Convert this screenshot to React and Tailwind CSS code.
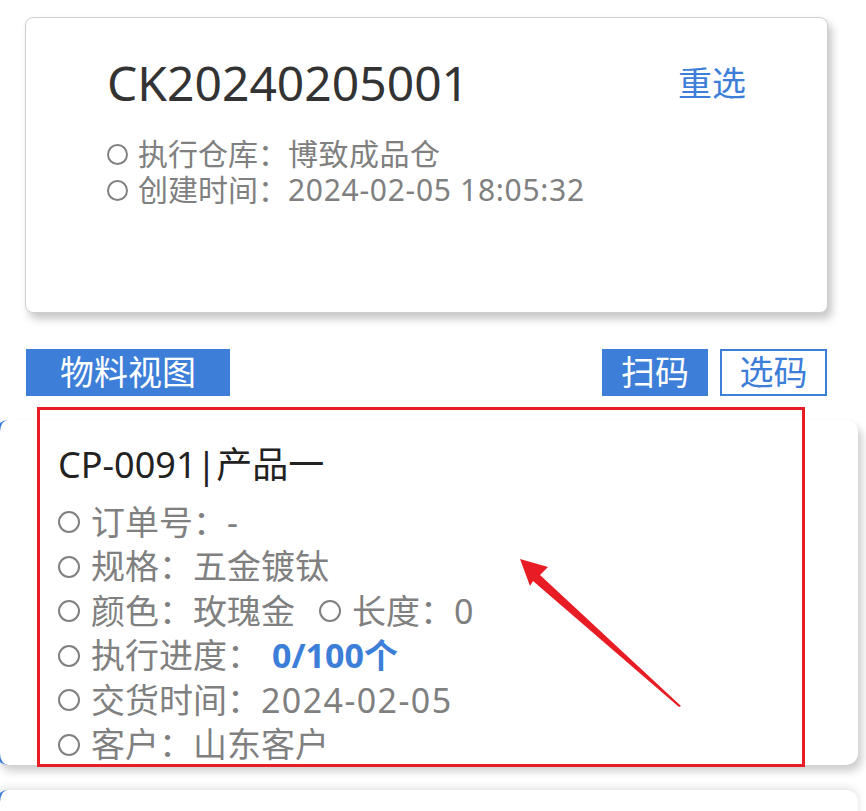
import React from "react";

const FONT = { fontFamily: '"Noto Sans", "Noto Sans CJK SC", sans-serif' };

const orderInfo = {
  code: "CK20240205001",
  warehouse: "博致成品仓",
  createdAt: "2024-02-05 18:05:32",
};

const material = {
  code: "CP-0091",
  name: "产品一",
  orderNo: "-",
  spec: "五金镀钛",
  color: "玫瑰金",
  length: 0,
  done: 0,
  total: 100,
  deliveryDate: "2024-02-05",
  customer: "山东客户",
};

function Dot({ size = "w-[22px] h-[22px]" }) {
  return <span className={`inline-block ${size} rounded-full border-2 border-[#808080] shrink-0`} />;
}

function InfoLine({ children }) {
  return (
    <div className="flex items-center gap-[11px] h-[44.5px]">
      <Dot />
      <div className="flex items-center">{children}</div>
    </div>
  );
}

export default function App() {
  return (
    <div className="relative w-[866px] h-[811px] overflow-hidden bg-white" style={FONT}>
      {/* order header card */}
      <div className="pt-[17px] pl-[25px] pr-[38px]">
        <div className="h-[296px] rounded-[8px] border border-[#cfcfcf] bg-white shadow-[4px_6px_8px_rgba(0,0,0,0.22)] pl-[81px] pr-[81px] pt-[33px]">
          <div className="flex items-center justify-between">
            <h1 className="text-[48px] leading-[64px] text-[#333]">{orderInfo.code}</h1>
            <button className="text-[34px] leading-[64px] text-[#3d7ed8]">重选</button>
          </div>
          <div className="mt-[21px] text-[30px] leading-[36px] text-[#808080]">
            <div className="flex items-center gap-[10px] h-[36px]">
              <Dot size="w-[21px] h-[21px]" />
              <span className="flex">
                <span>执行仓库：</span>
                <span className="tracking-[0.5px]">{orderInfo.warehouse}</span>
              </span>
            </div>
            <div className="flex items-center gap-[10px] h-[36px]">
              <Dot size="w-[21px] h-[21px]" />
              <span className="flex">
                <span>创建时间：</span>
                <span className="tracking-[0.7px]">{orderInfo.createdAt}</span>
              </span>
            </div>
          </div>
        </div>
      </div>

      {/* tabs */}
      <div className="mt-[36px] pl-[26px] pr-[39px] flex items-center justify-between">
        <button className="w-[204px] h-[47px] bg-[#3d7ed8] text-white text-[34px] leading-[47px]">物料视图</button>
        <div className="flex gap-[12px]">
          <button className="w-[106px] h-[47px] bg-[#3d7ed8] text-white text-[34px] leading-[47px]">扫码</button>
          <button className="w-[107px] h-[47px] border-2 border-[#3d7ed8] bg-white text-[#3d7ed8] text-[34px] leading-[43px]">选码</button>
        </div>
      </div>

      {/* material cards */}
      <div className="mt-[24px] -ml-[4px] mr-[8px] flex flex-col gap-[25px]">
        <div className="h-[345px] rounded-[12px] border-l-[4px] border-[#3d7ed8] bg-white shadow-[4px_6px_8px_rgba(0,0,0,0.2)] pl-[58px] pt-[20px]">
          <div className="text-[36px] leading-[50px] text-[#222]">
            {material.code}|{material.name}
          </div>
          <div className="mt-[10px] text-[34px] text-[#808080]">
            <InfoLine>订单号：{material.orderNo}</InfoLine>
            <InfoLine>规格：{material.spec}</InfoLine>
            <InfoLine>
              <span>颜色：{material.color}</span>
              <span className="ml-[24px] mr-[11px] flex">
                <Dot />
              </span>
              <span>长度：{material.length}</span>
            </InfoLine>
            <InfoLine>
              <span>执行进度：</span>
              <span className="ml-[11px] font-bold text-[#3d7ed8]">
                {material.done}/{material.total}个
              </span>
            </InfoLine>
            <InfoLine>
              <span>交货时间：</span>
              <span className="tracking-[1.4px]">{material.deliveryDate}</span>
            </InfoLine>
            <InfoLine>客户：{material.customer}</InfoLine>
          </div>
        </div>
        <div className="h-[200px] rounded-[12px] border-l-[4px] border-[#3d7ed8] bg-white shadow-[0_-2px_8px_rgba(0,0,0,0.12)]" />
      </div>

      {/* annotation overlay */}
      <div className="absolute left-[37px] top-[407px] w-[768px] h-[360px] border-[3px] border-[#e81c24] pointer-events-none" />
      <svg className="absolute left-0 top-0 pointer-events-none" width="866" height="811">
        <polygon
          points="520,559 548,567 540,575 681,706 679,707 533,581 530,586"
          fill="#e81c24"
        />
      </svg>
    </div>
  );
}
